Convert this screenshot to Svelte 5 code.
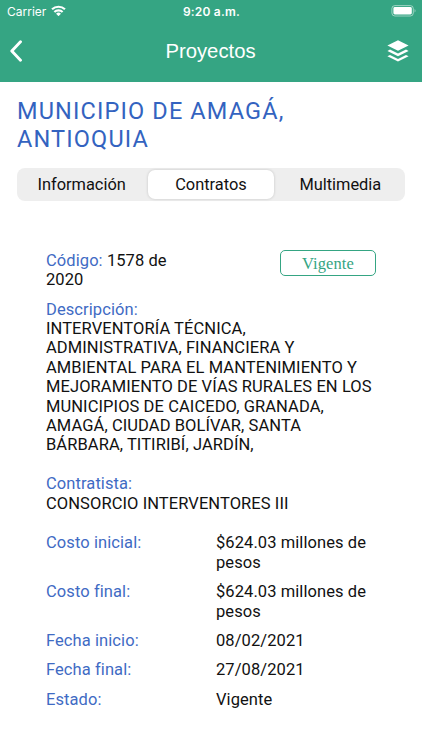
<script>
  const title = 'MUNICIPIO DE AMAGÁ, ANTIOQUIA';
  const tabs = ['Información', 'Contratos', 'Multimedia'];
  let active = 'Contratos';

  const rows = [
    { label: 'Costo inicial:', value: '$624.03 millones de pesos' },
    { label: 'Costo final:', value: '$624.03 millones de pesos' },
    { label: 'Fecha inicio:', value: '08/02/2021' },
    { label: 'Fecha final:', value: '27/08/2021' },
    { label: 'Estado:', value: 'Vigente' }
  ];
</script>

<div class="screen">
  <header>
    <div class="status">
      <div class="carrier">
        <span>Carrier</span>
        <svg class="wifi" width="15" height="11.5" viewBox="0 0 16 12" fill="none" stroke="#fff" stroke-width="2.3">
          <path d="M1.1 4.5a10 10 0 0 1 13.8 0" />
          <path d="M3.6 7.4a6.3 6.3 0 0 1 8.8 0" />
          <path d="M8 11.8 5.4 9.2a3.8 3.8 0 0 1 5.2 0z" fill="#fff" stroke="none" />
        </svg>
      </div>
      <span class="time">9:20 a.m.</span>
      <svg class="battery" width="26" height="12" viewBox="0 0 26 12">
        <rect x="0.9" y="0.6" width="21.4" height="10.4" rx="3" fill="none" stroke="#fff" stroke-opacity="0.5" />
        <rect x="2.4" y="2.1" width="18.4" height="7.4" rx="1.4" fill="#fff" />
        <path d="M23.6 4.1c1.2.4 1.2 3 0 3.4z" fill="#fff" fill-opacity="0.55" />
      </svg>
    </div>
    <nav>
      <button class="icon" aria-label="Atrás">
        <svg width="14" height="22" viewBox="0 0 14 22" fill="none" stroke="#fff" stroke-width="2.9" stroke-linecap="round" stroke-linejoin="round">
          <path d="M11.5 1.8 2.8 11l8.7 9.2" />
        </svg>
      </button>
      <h1>Proyectos</h1>
      <button class="icon" aria-label="Capas">
        <svg width="22" height="22" viewBox="0 0 22 22" fill="#fff">
          <path d="M11 .2 21.6 5.5 11 10.8.4 5.5z" />
          <path d="M.4 10.9 3 9.6l8 4 8-4 2.6 1.3L11 16.2z" />
          <path d="M.4 16.3 3 15l8 4 8-4 2.6 1.3L11 21.6z" />
        </svg>
      </button>
    </nav>
  </header>

  <main>
    <h2>{title}</h2>

    <div class="tabs">
      {#each tabs as tab}
        <button class="tab" class:active={tab === active} on:click={() => (active = tab)}>{tab}</button>
      {/each}
    </div>

    <section class="contract">
      <div class="top">
        <p class="code"><span class="label">Código:</span> 1578 de 2020</p>
        <span class="badge">Vigente</span>
      </div>

      <div class="description">
        <div class="label">Descripción:</div>
        <p>INTERVENTORÍA TÉCNICA, ADMINISTRATIVA, FINANCIERA Y AMBIENTAL PARA EL MANTENIMIENTO Y MEJORAMIENTO DE VÍAS RURALES EN LOS MUNICIPIOS DE CAICEDO, GRANADA, AMAGÁ, CIUDAD BOLÍVAR, SANTA BÁRBARA, TITIRIBÍ, JARDÍN,</p>
      </div>

      <div class="contractor">
        <div class="label">Contratista:</div>
        <p>CONSORCIO INTERVENTORES III</p>
      </div>

      <div class="rows">
        {#each rows as row}
          <div class="row">
            <span class="label">{row.label}</span>
            <span>{row.value}</span>
          </div>
        {/each}
      </div>
    </section>
  </main>
</div>

<style>
  :global(body) {
    margin: 0;
    background: #fff;
  }

  .screen {
    height: 750px;
    overflow: hidden;
    font-family: Roboto, sans-serif;
    color: #111;
  }

  header {
    height: 82px;
    background: #35a583;
    color: #fff;
  }

  .status {
    height: 22px;
    display: grid;
    grid-template-columns: 1fr auto 1fr;
    align-items: center;
    padding: 0 5px 0 7px;
    font-family: Inter, sans-serif;
    font-size: 12px;
  }

  .carrier {
    display: flex;
    align-items: center;
    gap: 5px;
  }

  .wifi {
    margin-top: -1px;
  }

  .time {
    font-weight: 600;
    letter-spacing: 0.2px;
    margin-right: 1px;
  }

  .battery {
    justify-self: end;
    margin-top: -1px;
  }

  nav {
    height: 58px;
    display: flex;
    align-items: center;
    justify-content: space-between;
    padding: 0 13px 0 9px;
  }

  .icon {
    width: 22px;
    height: 22px;
    display: flex;
    padding: 0;
    border: 0;
    background: none;
  }

  h1 {
    margin: 0 0 0 3px;
    font-family: 'Liberation Sans', Arial, sans-serif;
    font-size: 20.3px;
    font-weight: 400;
  }

  main {
    padding: 16px 17px 0;
  }

  h2 {
    width: 300px;
    margin: 0;
    font-size: 23.5px;
    line-height: 27.5px;
    font-weight: 400;
    letter-spacing: 1.15px;
    color: #3363c0;
  }

  .tabs {
    height: 33px;
    box-sizing: border-box;
    display: grid;
    grid-template-columns: repeat(3, 1fr);
    margin-top: 15px;
    padding: 2px 0;
    border-radius: 8px;
    background: #eee;
  }

  .tab {
    margin: 0 1.5px;
    padding: 0;
    border: 0;
    border-radius: 7px;
    background: none;
    font-family: inherit;
    font-size: 16.4px;
    color: #111;
  }

  .tab.active {
    background: #fff;
    box-shadow: 0 0 3px rgba(0, 0, 0, 0.18);
  }

  .contract {
    padding: 49.9px 29px 0;
    font-size: 16.5px;
    line-height: 19.4px;
    letter-spacing: 0.08px;
  }

  .label {
    color: #3f6bc4;
  }

  p {
    margin: 0;
  }

  .top {
    display: flex;
    justify-content: space-between;
    align-items: flex-start;
  }

  .code {
    width: 140px;
  }

  .badge {
    width: 96px;
    height: 26px;
    box-sizing: border-box;
    margin-top: -0.9px;
    border: 1px solid #35a583;
    border-radius: 5px;
    font-family: 'Liberation Serif', serif;
    line-height: 25px;
    text-align: center;
    color: #35a583;
  }

  .description {
    margin-top: 9.8px;
  }

  .contractor {
    margin-top: 19.6px;
  }

  .rows {
    display: flex;
    flex-direction: column;
    gap: 10px;
    margin-top: 20.2px;
  }

  .row {
    display: grid;
    grid-template-columns: 170px 160px;
  }
</style>
